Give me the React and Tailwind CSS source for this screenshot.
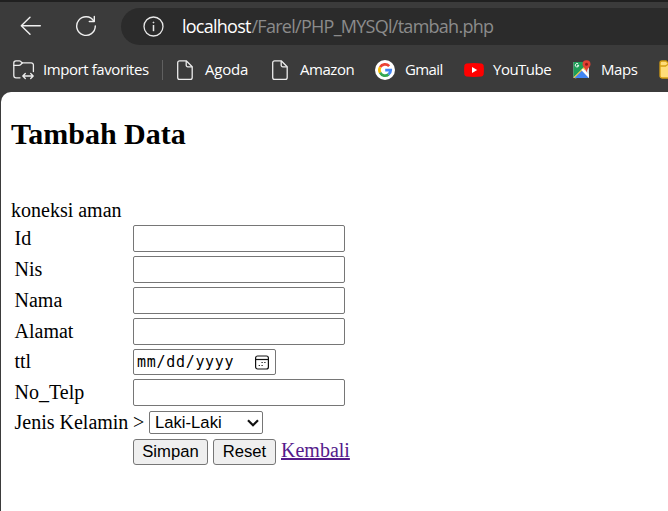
import React from "react";

const ui = "font-['Open_Sans','Noto_Sans',sans-serif]";

function PageIcon() {
  return (
    <svg width="16" height="20" viewBox="0 0 16 20" fill="none" stroke="#ececec" strokeWidth="1.3" strokeLinejoin="round" className="block shrink-0">
      <path d="M2.6.8h6.6l6 6v10.6a1.9 1.9 0 0 1-1.9 1.9H2.6A1.9 1.9 0 0 1 .7 17.4V2.7A1.9 1.9 0 0 1 2.6.8Z" />
      <path d="M9.2.9v4.3a1.6 1.6 0 0 0 1.6 1.6h4.3" />
    </svg>
  );
}

function GoogleIcon() {
  return (
    <svg width="20" height="20" viewBox="0 0 20 20" className="block shrink-0">
      <circle cx="10" cy="10" r="10" fill="#fff" />
      <g fill="none" strokeWidth="2.7">
        <path d="M5.1 7.2A5.6 5.6 0 0 1 14.2 6.2" stroke="#ea4335" />
        <path d="M5.2 12.8A5.6 5.6 0 0 1 5.2 7.1" stroke="#fbbc05" />
        <path d="M13.6 14.4A5.6 5.6 0 0 1 5.1 12.7" stroke="#34a853" />
        <path d="M10.2 10.1h5.5A5.6 5.6 0 0 1 13.5 14.4" stroke="#4285f4" />
      </g>
    </svg>
  );
}

function YouTubeIcon() {
  return (
    <svg width="20" height="14" viewBox="0 0 20 14" className="block shrink-0">
      <path d="M2.4.5Q10-.4 17.6.5 19.3.8 19.6 2.5 20.2 7 19.6 11.5 19.3 13.2 17.6 13.5 10 14.4 2.4 13.5.7 13.2.4 11.5-.2 7 .4 2.5.7.8 2.4.5Z" fill="#f00" />
      <path d="M8 4l5.2 3L8 10Z" fill="#fff" />
    </svg>
  );
}

function MapsIcon() {
  return (
    <svg width="18" height="19" viewBox="0 0 18 19" className="block shrink-0">
      <path d="M.5 2h15.5v16H.5Z" fill="#dadce0" />
      <path d="M.5 2h11v5L.5 17.5Z" fill="#1e9e58" />
      <path d="M.5 17.500 12 6l1.500 2L3 18.500Z" fill="#f7cb3b" />
      <path d="M1.500 18 9 10.500l7 7.500Z" fill="#4285f4" />
      <path d="M8.300 10 10 8.400l6 6.100V18Z" fill="#fff" />
      <path d="M5.800 5.400H4.200m1.500 0A1.700 1.700 0 1 1 5.200 4" stroke="#fff" fill="none" />
      <path d="M13.500.3a4 4 0 0 1 4 4c0 2.700-3.200 3.700-4 8.200-.8-4.500-4-5.500-4-8.200a4 4 0 0 1 4-4Z" fill="#e34133" />
      <circle cx="13.500" cy="4.300" r="1.500" fill="#8d1c17" />
    </svg>
  );
}

function Browser() {
  return (
    <header className={`h-[92px] overflow-hidden border-t-2 border-[#202020] bg-[#3b3b3b] text-white ${ui}`}>
      <div className="flex h-[47px] items-center pt-[1px]">
        <svg width="22" height="20" viewBox="0 0 22 20" fill="none" stroke="#f0f0f0" strokeWidth="1.4" strokeLinecap="round" strokeLinejoin="round" className="ml-[20px] shrink-0">
          <path d="M20.300 9.800H1.500M10 1.300 1.300 9.800l8.700 8.500" />
        </svg>
        <svg width="22" height="22" viewBox="0 0 22 22" fill="none" stroke="#f0f0f0" strokeWidth="1.4" strokeLinecap="round" strokeLinejoin="round" className="ml-[33px] shrink-0">
          <path d="M18.800 6A9.300 9.300 0 1 0 20.300 11" />
          <path d="M19.300 1.500v5h-5" />
        </svg>
        <div className="ml-[24px] flex h-[37px] flex-1 items-center rounded-l-full bg-[#2b2b2b] pl-[22px]">
          <svg width="21" height="21" viewBox="0 0 21 21" fill="none" stroke="#e8e8e8" strokeWidth="1.3" className="shrink-0">
            <circle cx="10.500" cy="10.500" r="9.500" />
            <path d="M10.500 9v6.200" strokeWidth="1.5" />
            <circle cx="10.500" cy="6.500" r=".6" fill="#e8e8e8" strokeWidth=".6" />
          </svg>
          <div className="ml-[18px] flex whitespace-nowrap text-[18px] leading-6 text-[#8b8b8b]">
            <span className="w-[69.5px] tracking-[-0.75px] text-white">localhost</span>
            <span className="tracking-[-0.73px]">/Farel/PHP_MYSQl/tambah.php</span>
          </div>
        </div>
      </div>
      <nav className="flex h-[41px] w-[720px] items-center whitespace-nowrap text-[15px]">
        <div className="flex w-[149px] shrink-0 items-center pl-[13px]">
          <svg width="22" height="20" viewBox="0 0 22 20" fill="none" stroke="#ececec" strokeWidth="1.3" strokeLinecap="round" strokeLinejoin="round" className="shrink-0">
            <path d="M7 17.800H3A2.200 2.200 0 0 1 .8 15.600V3A2.200 2.200 0 0 1 3 .8h3.300c.6 0 1 .2 1.400.6l1.700 1.500h8.800a2.200 2.200 0 0 1 2.200 2.200v6.500" />
            <path d="M.8 5.300h5.300c.6 0 1-.2 1.400-.6l1.800-1.700M10 16h10m-7.700-2.500L9.800 16l2.500 2.500m5.400-5 2.500 2.500-2.500 2.500" />
          </svg>
          <span className="ml-[8px] tracking-[-0.42px]">Import favorites</span>
        </div>
        <div className="ml-[13px] h-5 w-px shrink-0 bg-[#606060]" />
        <div className="ml-[14px] flex w-[95px] shrink-0 items-center"><PageIcon /><span className="ml-[12px] tracking-[-0.2px]">Agoda</span></div>
        <div className="flex w-[103px] shrink-0 items-center"><PageIcon /><span className="ml-[12px] tracking-[-0.45px]">Amazon</span></div>
        <div className="flex w-[89px] shrink-0 items-center"><GoogleIcon /><span className="ml-[10px] tracking-[-0.6px]">Gmail</span></div>
        <div className="flex w-[109px] shrink-0 items-center"><YouTubeIcon /><span className="ml-[9px] tracking-[-0.5px]">YouTube</span></div>
        <div className="flex w-[86px] shrink-0 items-center"><MapsIcon /><span className="ml-[10px] tracking-[-0.4px]">Maps</span></div>
        <svg width="21" height="19" viewBox="0 0 21 19" className="shrink-0">
          <path d="M1 3a2 2 0 0 1 2-2h4l3 3h8a2 2 0 0 1 2 2v10a2 2 0 0 1-2 2H3a2 2 0 0 1-2-2Z" fill="#ffdc79" stroke="#d69e12" strokeWidth="1.3" />
          <path d="M1 6h5.500L10 3.500" fill="none" stroke="#d69e12" strokeWidth="1.3" />
        </svg>
      </nav>
    </header>
  );
}

function Row({ label, className, children }) {
  return (
    <div className={`flex items-center ${className}`}>
      <label className="w-[119px] shrink-0 whitespace-nowrap pl-[0.5px] leading-[23px]">{label}</label>
      {children}
    </div>
  );
}

function Field({ label }) {
  return (
    <Row label={label} className="mb-[4px] h-[27px]">
      <input type="text" aria-label={label} className="block h-[27px] w-[212px] rounded-[2px] border border-[#767676] bg-white px-1" />
    </Row>
  );
}

export default function App() {
  return (
    <div className="h-[511px] w-[668px] overflow-hidden bg-[#3b3b3b]">
      <Browser />
      <main className="ml-px h-[419px] rounded-tl-[10px] bg-white pl-[10px] font-['Liberation_Serif',serif] text-[20px] text-black">
        <h2 className="pt-[25px] text-[30px] font-bold leading-[34px]">Tambah Data</h2>
        <p className="mt-[48px] leading-[23px]">koneksi aman</p>
        <form className="mt-[3px] pl-[3px]" onSubmit={(e) => e.preventDefault()}>
          <Field label="Id" />
          <Field label="Nis" />
          <Field label="Nama" />
          <Field label="Alamat" />
          <Row label={<span className="block pb-[1px]">ttl</span>} className="mb-[4px] h-[26px]">
            <div className="flex h-[26px] w-[143px] items-center justify-between rounded-[2px] border border-[#767676] pl-[3px] pr-[5px]">
              <span className="font-['DejaVu_Sans_Mono',monospace] text-[15px] leading-5 tracking-[0.7px]">mm/dd/yyyy</span>
              <svg width="16" height="15" viewBox="0 0 16 15" fill="none" stroke="#111" strokeWidth="1.2" className="shrink-0">
                <rect x="1.6" y="1" width="12.8" height="13" rx="2" />
                <path d="M1.6 4.500h12.800" />
                <path d="M7.500 7.500h1.200m1.600 0h1.200M4.700 10.500h1.200m1.600 0h1.200" strokeWidth="1.2" />
              </svg>
            </div>
          </Row>
          <Field label="No_Telp" />
          <Row label="Jenis Kelamin" className="mt-[5px] mb-[5px] h-[23px]">
            <span className="w-[16px] leading-[23px]">&gt;</span>
            <div className="grid h-[23px] w-[114px] items-center">
              <select className="col-start-1 row-start-1 h-[23px] w-[114px] appearance-none rounded-[2px] border border-[#767676] bg-white pl-[5px] font-['Liberation_Sans',sans-serif] text-[16.67px] leading-[20px]">
                <option>Laki-Laki</option>
              </select>
              <svg width="12" height="8" viewBox="0 0 12 8" fill="none" stroke="#111" strokeWidth="2.2" className="pointer-events-none z-10 col-start-1 row-start-1 mr-[4px] justify-self-end">
                <path d="m1 1.200 5 5 5-5" />
              </svg>
            </div>
          </Row>
          <Row label="" className="h-[26px]">
            <button type="submit" className="h-[26px] w-[75px] rounded-[3px] border border-[#767676] bg-[#efefef] font-['Liberation_Sans',sans-serif] text-[16.67px] leading-[24px]">Simpan</button>
            <button type="reset" className="ml-[5px] h-[26px] w-[63px] rounded-[3px] border border-[#767676] bg-[#efefef] font-['Liberation_Sans',sans-serif] text-[16.67px] leading-[24px]">Reset</button>
            <a href="#" className="mb-[3px] ml-[5px] leading-[23px] text-[#551a8b] underline">Kembali</a>
          </Row>
        </form>
      </main>
    </div>
  );
}
